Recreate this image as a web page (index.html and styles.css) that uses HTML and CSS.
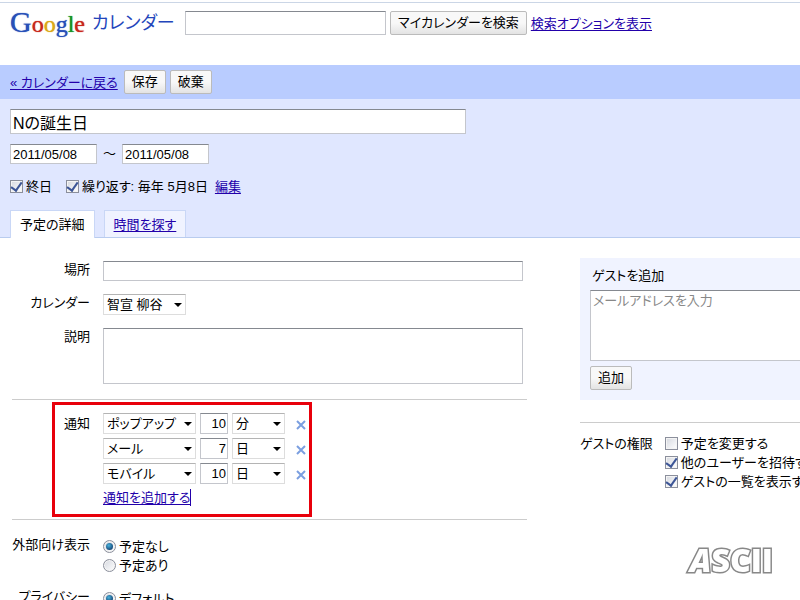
FILE: index.html
```
<!DOCTYPE html>
<html lang="ja">
<head>
    <meta charset="UTF-8">
    <meta name="viewport" content="width=device-width, initial-scale=1.0">
    <title>Google カレンダー</title>
    <link rel="stylesheet" href="styles.css">
</head>
<body>
    <header class="header">
        <h1 class="logo">
            <span class="logo-google"><span class="blue big">G</span><span class="red">o</span><span class="yellow">o</span><span class="blue">g</span><span class="green">l</span><span class="red">e</span></span>
            <span class="logo-name">カレンダー</span>
        </h1>
        <form class="search">
            <input type="text" class="search-input" aria-label="検索">
            <button type="button" class="btn">マイカレンダーを検索</button>
            <a href="#">検索オプションを表示</a>
        </form>
    </header>

    <nav class="toolbar">
        <a href="#" class="back">« カレンダーに戻る</a>
        <button type="button" class="btn">保存</button>
        <button type="button" class="btn">破棄</button>
    </nav>

    <section class="event">
        <input type="text" class="event-title" value="Nの誕生日" aria-label="タイトル">
        <div class="dates">
            <input type="text" value="2011/05/08" aria-label="開始日">
            <span class="tilde">～</span>
            <input type="text" value="2011/05/08" aria-label="終了日">
        </div>
        <div class="options">
            <label class="check"><input type="checkbox" checked>終日</label>
            <label class="check"><input type="checkbox" checked>繰り返す: 毎年 5月8日</label>
            <a href="#">編集</a>
        </div>
        <div class="tabs">
            <div class="tab active">予定の詳細</div>
            <div class="tab"><a href="#">時間を探す</a></div>
        </div>
    </section>

    <main class="main">
        <div class="details">
            <div class="row">
                <label class="name" for="place">場所</label>
                <input type="text" id="place" class="field">
            </div>
            <div class="row">
                <label class="name" for="calendar">カレンダー</label>
                <span class="select select-calendar"><select id="calendar"><option>智宣 柳谷</option></select></span>
            </div>
            <div class="row">
                <label class="name" for="description">説明</label>
                <textarea id="description" class="field description"></textarea>
            </div>

            <div class="row reminders">
                <span class="name">通知</span>
                <div class="reminder-list">
                    <div class="reminder">
                        <span class="select select-type"><select aria-label="通知方法"><option>ポップアップ</option></select></span>
                        <input type="text" value="10" aria-label="時間">
                        <span class="select select-unit"><select aria-label="単位"><option>分</option></select></span>
                        <button type="button" class="remove" aria-label="削除"><svg width="10" height="10" viewBox="0 0 10 10"><path d="M1 1l8 8M9 1l-8 8"/></svg></button>
                    </div>
                    <div class="reminder">
                        <span class="select select-type"><select aria-label="通知方法"><option>メール</option></select></span>
                        <input type="text" value="7" aria-label="時間">
                        <span class="select select-unit"><select aria-label="単位"><option>日</option></select></span>
                        <button type="button" class="remove" aria-label="削除"><svg width="10" height="10" viewBox="0 0 10 10"><path d="M1 1l8 8M9 1l-8 8"/></svg></button>
                    </div>
                    <div class="reminder">
                        <span class="select select-type"><select aria-label="通知方法"><option>モバイル</option></select></span>
                        <input type="text" value="10" aria-label="時間">
                        <span class="select select-unit"><select aria-label="単位"><option>日</option></select></span>
                        <button type="button" class="remove" aria-label="削除"><svg width="10" height="10" viewBox="0 0 10 10"><path d="M1 1l8 8M9 1l-8 8"/></svg></button>
                    </div>
                    <a href="#" class="add-reminder">通知を追加する</a>
                </div>
                <div class="highlight"></div>
            </div>

            <div class="row">
                <span class="name">外部向け表示</span>
                <div class="choices">
                    <label class="check"><input type="radio" name="show" checked>予定なし</label>
                    <label class="check"><input type="radio" name="show">予定あり</label>
                </div>
            </div>
            <div class="row">
                <span class="name">プライバシー</span>
                <div class="choices">
                    <label class="check"><input type="radio" name="privacy" checked>デフォルト</label>
                </div>
            </div>
        </div>

        <aside class="guests">
            <div class="guest-box">
                <label class="guest-title" for="guests">ゲストを追加</label>
                <textarea id="guests" placeholder="メールアドレスを入力"></textarea>
                <button type="button" class="btn">追加</button>
            </div>
            <div class="permissions">
                <span>ゲストの権限</span>
                <div class="choices">
                    <label class="check"><input type="checkbox">予定を変更する</label>
                    <label class="check"><input type="checkbox" checked>他のユーザーを招待する</label>
                    <label class="check"><input type="checkbox" checked>ゲストの一覧を表示する</label>
                </div>
            </div>
        </aside>
    </main>

    <div class="watermark"><i>A</i>SCII</div>
</body>
</html>
```

FILE: styles.css
```
* {
    box-sizing: border-box;
}
html {
    overflow: hidden;
}
body {
    margin: 0;
    padding-top: 2px;
    font-family: "Liberation Sans", "Noto Sans CJK JP", sans-serif;
    font-size: 13px;
    line-height: 19px;
    font-feature-settings: "palt";
    color: #000;
    background: #fff;
}
input, button, select, textarea {
    margin: 0;
    font: inherit;
    font-feature-settings: inherit;
    color: inherit;
    border-radius: 0;
}
input[type="text"], textarea {
    display: block;
    padding: 0 2px;
    background: #fff;
    border: 1px solid #c4c6cc;
    border-top-color: #858990;
    outline: none;
    resize: none;
}
a {
    color: #20a;
    text-underline-offset: 2px;
}
.btn {
    height: 24px;
    padding: 0 7px;
    line-height: 20px;
    white-space: nowrap;
    border: 1px solid #bbb;
    border-radius: 2px;
    background: linear-gradient(#f8f8f8 50%, #e3e3e3);
}

/* Header */
.header {
    display: flex;
    height: 63px;
    padding: 8px 10px 0;
    border-top: 1px solid #cbd6e6;
    white-space: nowrap;
}
.logo {
    display: flex;
    align-items: center;
    gap: 7px;
    width: 175px;
    height: 24px;
    margin: 0;
    font-weight: normal;
}
.logo-google {
    font-family: "Liberation Serif", serif;
    font-size: 24px;
    line-height: 24px;
    text-shadow: 0 0 1px currentColor;
}
.logo-google .big {
    font-size: 30px;
}
.blue { color: #2850b8; }
.red { color: #c8281c; }
.yellow { color: #dca818; }
.green { color: #189428; }
.logo-name {
    font-size: 18px;
    color: #2345bb;
}
.search {
    display: flex;
    align-items: center;
    gap: 4px;
    height: 24px;
}
.search-input {
    width: 201px;
    height: 24px;
}

/* Toolbar */
.toolbar {
    display: flex;
    align-items: center;
    gap: 4px;
    height: 34px;
    padding: 0 10px;
    background: #b9ccff;
}
.back {
    margin-right: 2px;
}

/* Event summary */
.event {
    padding: 10px 10px 0;
    background: #e0e7ff;
    border-bottom: 1px solid #b9ccef;
}
.event .event-title {
    width: 456px;
    height: 25px;
    font-size: 16px;
}
.dates {
    display: flex;
    gap: 6px;
    margin-top: 10px;
}
.dates input {
    width: 87px;
    height: 20px;
}
.tilde {
    width: 13px;
    font-feature-settings: normal;
}
.options {
    display: flex;
    margin-top: 13px;
    gap: 14px;
}
.options a {
    margin-left: -7px;
}
.check {
    display: flex;
    align-items: center;
    gap: 3px;
    white-space: nowrap;
}
.check input {
    display: grid;
    place-content: center;
    flex: none;
    width: 13px;
    height: 13px;
    appearance: none;
    border: 1px solid #8b8f9c;
    background: linear-gradient(135deg, #d5d8df, #fff);
    box-shadow: inset 0 0 0 1px #f4f4f4;
}
.check input[type="checkbox"]:checked::before {
    content: "";
    width: 5px;
    height: 9px;
    margin-bottom: 3px;
    border: solid #3c5596;
    border-width: 0 2px 2px 0;
    transform: rotate(35deg);
}
.check input[type="radio"] {
    border-radius: 50%;
}
.check input[type="radio"]:checked::before {
    content: "";
    width: 7px;
    height: 7px;
    border-radius: 50%;
    background: radial-gradient(circle at 40% 35%, #49b2dc, #123f70 80%);
}
.tabs {
    display: flex;
    gap: 9px;
    margin-top: 14px;
}
.tab {
    height: 27px;
    padding: 4px 9px;
    border: 1px solid #c9d7f6;
    border-bottom: 0;
    background: #f0f3ff;
}
.tab.active {
    height: 28px;
    margin-bottom: -1px;
    background: #fff;
}

/* Details form */
.main {
    display: flex;
    gap: 53px;
    padding-left: 12px;
}
.details {
    flex: 0 0 515px;
    padding-top: 23px;
}
.row {
    display: flex;
    gap: 13px;
    margin-bottom: 13px;
}
.name {
    flex: 0 0 78px;
    line-height: 17px;
    text-align: right;
    white-space: nowrap;
}
.field {
    width: 420px;
    height: 20px;
}
.description {
    height: 56px;
}
.select {
    position: relative;
    display: block;
    height: 21px;
}
.select select {
    display: block;
    width: 100%;
    height: 100%;
    padding: 0 3px;
    line-height: 19px;
    appearance: none;
    background: #fff;
    border: 1px solid #ddd;
    border-top-color: #b4b4b4;
}
.select::after {
    content: "";
    position: absolute;
    top: 9px;
    right: 4px;
    border: 4px solid transparent;
    border-top-color: #000;
    border-bottom: 0;
    pointer-events: none;
}
.select-calendar {
    width: 83px;
}
.select-type {
    width: 93px;
}
.select-unit {
    width: 53px;
}
.reminders {
    position: relative;
    margin: 15px 0 16px;
    padding: 13px 0 12px;
    border: solid #ccc;
    border-width: 1px 0;
}
.reminders .name {
    line-height: 21px;
}
.reminder {
    display: flex;
    align-items: center;
    gap: 4px;
    margin-bottom: 4px;
}
.reminder input[type="text"] {
    width: 28px;
    height: 21px;
    padding: 0 1px;
    text-align: right;
}
.remove {
    display: flex;
    margin: 3px 0 0 7px;
    padding: 0;
    border: 0;
    background: none;
}
.remove svg {
    fill: none;
    stroke: #7b9fe0;
    stroke-width: 2;
}
.add-reminder {
    display: inline-block;
    border-right: 1px solid #20a;
    line-height: 17px;
}
.highlight {
    position: absolute;
    top: 2px;
    left: 40px;
    width: 260px;
    bottom: 2px;
    border: 3px solid #e8000b;
    pointer-events: none;
}
.choices {
    padding-top: 1px;
}

/* Guests */
.guests {
    flex: 1;
    min-width: 0;
    padding-top: 20px;
}
.guest-box {
    padding: 8px 0 10px 10px;
    background: #f0f3ff;
}
.guest-title {
    display: block;
    padding: 0 2px 5px;
}
.guest-box textarea {
    width: 100%;
    height: 71px;
    margin-bottom: 5px;
    border-right: 0;
}
.guest-box textarea::placeholder {
    color: #888;
}
.permissions {
    display: flex;
    gap: 12px;
    margin-top: 22px;
    padding-top: 11px;
    border-top: 1px solid #ccc;
    white-space: nowrap;
}
.permissions .choices {
    padding-top: 0;
    overflow: hidden;
}

.watermark {
    position: fixed;
    right: 27px;
    bottom: 20px;
    font: 800 32px/40px "Open Sans", sans-serif;
    color: #fff;
    -webkit-text-stroke: 3px #888;
    paint-order: stroke fill;
}
```
